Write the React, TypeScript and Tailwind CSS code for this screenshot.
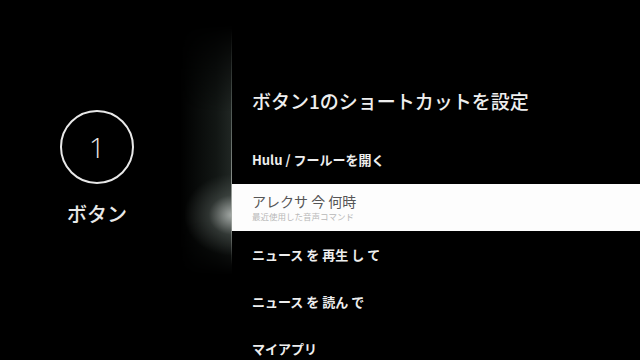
import React from "react";

export default function App() {
  const font = { fontFamily: '"Noto Sans CJK JP", "Noto Sans", sans-serif' };
  return (
    <div className="w-[640px] h-[360px] bg-black overflow-hidden flex relative" style={font}>
      {/* glow haze along panel edge */}
      <div className="absolute left-[180px] top-[25px] w-[52px] h-[250px] pointer-events-none bg-[linear-gradient(to_right,rgba(0,0,0,0)_0%,rgba(40,50,45,0.45)_70%,rgba(55,65,60,0.6)_100%)] [mask-image:linear-gradient(to_bottom,transparent_0%,black_35%,black_78%,transparent_100%)]" />
      {/* bright spot near selected row */}
      <div className="absolute left-[185px] top-[175px] w-[47px] h-[80px] pointer-events-none bg-[radial-gradient(ellipse_at_right_center,rgba(220,225,222,0.7)_0%,rgba(120,130,125,0.3)_35%,rgba(0,0,0,0)_72%)]" />
      {/* edge line */}
      <div className="absolute left-[231px] top-[30px] w-[1px] h-[235px] pointer-events-none bg-[linear-gradient(to_bottom,rgba(0,0,0,0)_0%,rgba(110,120,115,0.7)_40%,rgba(170,175,170,0.9)_75%,rgba(0,0,0,0)_100%)]" />
      <div className="w-[232px] shrink-0 flex flex-col items-center pt-[110px] pr-[38px] relative">
        <div className="w-[74px] h-[74px] rounded-full border-2 border-[#e8e8e8] flex items-center justify-center">
          <span className="text-[28px] leading-none text-[#e8e8e8] font-light" style={{ fontFamily: '"Open Sans", sans-serif' }}>1</span>
        </div>
        <div className="mt-[20px] text-[20px] leading-none font-medium text-[#e8e8e8]">ボタン</div>
      </div>
      <div className="flex-1 flex flex-col relative">
        <div className="pl-[20px] pt-[91px] text-[19px] leading-none text-[#eeeeee] font-medium">ボタン1のショートカットを設定</div>
        <div className="pl-[20px] mt-[43px] text-[13px] leading-none font-bold text-[#eeeeee]">Hulu / フールーを開く</div>
        <div className="mt-[18px] h-[47px] bg-[#fdfdfd] pl-[20px] flex flex-col justify-center">
          <div className="text-[14px] leading-none text-[#555555]">アレクサ 今 何時</div>
          <div className="mt-[4px] text-[8.5px] leading-none text-[#b8b8b8]">最近使用した音声コマンド</div>
        </div>
        <div className="pl-[20px] mt-[17px] text-[13px] leading-none font-bold text-[#eeeeee]">ニュース を 再生 し て</div>
        <div className="pl-[20px] mt-[34px] text-[13px] leading-none font-bold text-[#eeeeee]">ニュース を 読ん で</div>
        <div className="pl-[20px] mt-[34px] text-[13px] leading-none font-bold text-[#eeeeee]">マイアプリ</div>
      </div>
    </div>
  );
}
